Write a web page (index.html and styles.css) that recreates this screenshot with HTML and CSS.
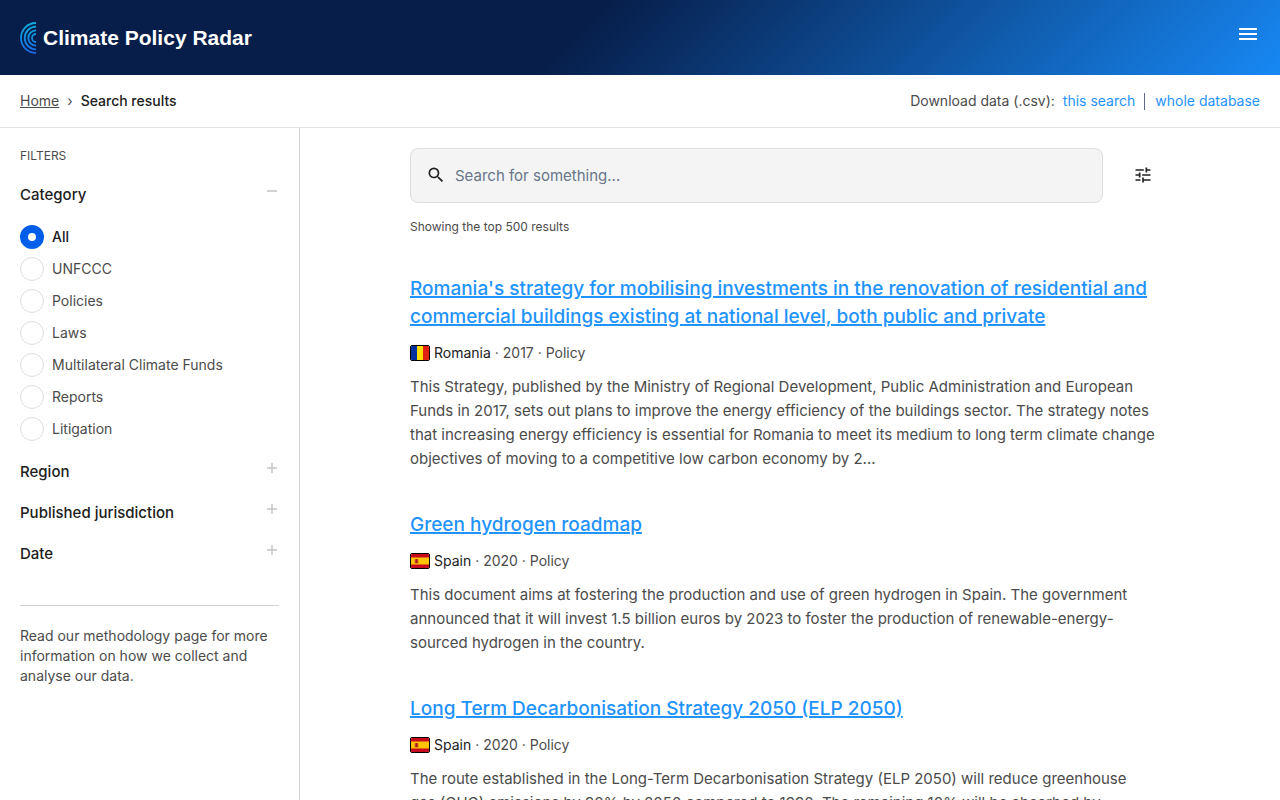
FILE: index.html
```html
<!DOCTYPE html>
<html lang="en">
<head>
<meta charset="utf-8">
<meta name="viewport" content="width=device-width, initial-scale=1">
<title>Search results - Climate Policy Radar</title>
<link rel="stylesheet" href="styles.css">
</head>
<body>
<header class="site-header">
  <a class="logo" href="#">
    <svg class="logo-mark" width="16" height="32" viewBox="0 0 16 32" aria-hidden="true">
      <defs>
        <linearGradient id="radar" x1="0" y1="0" x2="0" y2="32" gradientUnits="userSpaceOnUse">
          <stop offset="0" stop-color="#0cb4e0"/>
          <stop offset="1" stop-color="#1d63e0"/>
        </linearGradient>
      </defs>
      <g fill="none" stroke="url(#radar)" stroke-width="1.8">
        <path d="M16 1A15 15 0 0 0 16 31"/>
        <path d="M16 4.7A11.3 11.3 0 0 0 16 27.3"/>
        <path d="M16 8.3A7.7 7.7 0 0 0 16 23.7"/>
        <path d="M16 12A4 4 0 0 0 16 20"/>
      </g>
    </svg>
    <span>Climate Policy Radar</span>
  </a>
  <button class="icon-button menu-button" type="button" aria-label="Menu">
    <svg width="24" height="24" viewBox="0 0 24 24" fill="currentColor" aria-hidden="true"><path d="M3 18h18v-2H3v2zm0-5h18v-2H3v2zm0-7v2h18V6H3z"/></svg>
  </button>
</header>

<div class="subheader">
  <nav class="breadcrumbs" aria-label="Breadcrumb">
    <a href="#">Home</a>
    <span class="separator">›</span>
    <span class="current">Search results</span>
  </nav>
  <div class="downloads">
    <span>Download data (.csv):</span>
    <a href="#">this search</a>
    <span class="bar"></span>
    <a href="#">whole database</a>
  </div>
</div>

<div class="layout">
  <aside class="sidebar">
    <h2 class="filters-title">Filters</h2>
    <section class="filter-group">
      <button class="filter-toggle" type="button" aria-expanded="true">Category
        <svg width="14" height="14" viewBox="0 0 14 14" aria-hidden="true"><path d="M2 7h10" stroke="currentColor" stroke-width="1.5"/></svg>
      </button>
      <div class="options">
        <label><input type="radio" name="category" checked><span>All</span></label>
        <label><input type="radio" name="category"><span>UNFCCC</span></label>
        <label><input type="radio" name="category"><span>Policies</span></label>
        <label><input type="radio" name="category"><span>Laws</span></label>
        <label><input type="radio" name="category"><span>Multilateral Climate Funds</span></label>
        <label><input type="radio" name="category"><span>Reports</span></label>
        <label><input type="radio" name="category"><span>Litigation</span></label>
      </div>
    </section>
    <button class="filter-toggle" type="button" aria-expanded="false">Region
      <svg width="14" height="14" viewBox="0 0 14 14" aria-hidden="true"><path d="M2 7h10M7 2v10" stroke="currentColor" stroke-width="1.5"/></svg>
    </button>
    <button class="filter-toggle" type="button" aria-expanded="false">Published jurisdiction
      <svg width="14" height="14" viewBox="0 0 14 14" aria-hidden="true"><path d="M2 7h10M7 2v10" stroke="currentColor" stroke-width="1.5"/></svg>
    </button>
    <button class="filter-toggle" type="button" aria-expanded="false">Date
      <svg width="14" height="14" viewBox="0 0 14 14" aria-hidden="true"><path d="M2 7h10M7 2v10" stroke="currentColor" stroke-width="1.5"/></svg>
    </button>
    <p class="methodology">Read our methodology page for more information on how we collect and analyse our data.</p>
  </aside>

  <main class="content">
    <div class="column">
      <form class="search-row">
        <div class="search-box">
          <button class="icon-button" type="button" aria-label="Search">
            <svg width="20" height="20" viewBox="0 0 24 24" fill="currentColor" aria-hidden="true"><path d="M15.5 14h-.79l-.28-.27A6.471 6.471 0 0 0 16 9.5 6.5 6.5 0 1 0 9.5 16c1.61 0 3.09-.59 4.23-1.57l.27.28v.79l5 4.99L20.49 19l-4.99-5zm-6 0C7.01 14 5 11.99 5 9.5S7.01 5 9.5 5 14 7.01 14 9.5 11.99 14 9.5 14z"/></svg>
          </button>
          <input type="text" aria-label="Search" placeholder="Search for something...">
        </div>
        <button class="icon-button settings-button" type="button" aria-label="Search settings">
          <svg width="20" height="20" viewBox="0 0 24 24" fill="currentColor" aria-hidden="true"><path d="M3 17v2h6v-2H3zM3 5v2h10V5H3zm10 16v-2h8v-2h-8v-2h-2v6h2zM7 9v2H3v2h4v2h2V9H7zm14 4v-2H11v2h10zm-6-4h2V7h4V5h-4V3h-2v6z"/></svg>
        </button>
      </form>
      <p class="result-count">Showing the top 500 results</p>

      <div class="results">
        <article class="result">
          <h3><a href="#">Romania's strategy for mobilising investments in the renovation of residential and commercial buildings existing at national level, both public and private</a></h3>
          <div class="meta">
            <svg class="flag" viewBox="0 0 18 14" aria-hidden="true"><path fill="#00319c" d="M0 0h6v14H0z"/><path fill="#ffde00" d="M6 0h6v14H6z"/><path fill="#de2110" d="M12 0h6v14h-6z"/></svg>
            <span><b>Romania</b> · 2017 · Policy</span>
          </div>
          <p>This Strategy, published by the Ministry of Regional Development, Public Administration and European Funds in 2017, sets out plans to improve the energy efficiency of the buildings sector. The strategy notes that increasing energy efficiency is essential for Romania to meet its medium to long term climate change objectives of moving to a competitive low carbon economy by 2...</p>
        </article>
        <article class="result">
          <h3><a href="#">Green hydrogen roadmap</a></h3>
          <div class="meta">
            <svg class="flag" viewBox="0 0 18 14" aria-hidden="true"><path fill="#c60b1e" d="M0 0h18v14H0z"/><path fill="#ffc400" d="M0 3.5h18v7H0z"/><path fill="#c8782c" d="M3.5 5.5h4v4h-4z"/><path fill="#ad1519" d="M4.5 5h2v4h-2z"/></svg>
            <span><b>Spain</b> · 2020 · Policy</span>
          </div>
          <p>This document aims at fostering the production and use of green hydrogen in Spain. The government announced that it will invest 1.5 billion euros by 2023 to foster the production of renewable-energy-sourced hydrogen in the country.</p>
        </article>
        <article class="result">
          <h3><a href="#">Long Term Decarbonisation Strategy 2050 (ELP 2050)</a></h3>
          <div class="meta">
            <svg class="flag" viewBox="0 0 18 14" aria-hidden="true"><path fill="#c60b1e" d="M0 0h18v14H0z"/><path fill="#ffc400" d="M0 3.5h18v7H0z"/><path fill="#c8782c" d="M3.5 5.5h4v4h-4z"/><path fill="#ad1519" d="M4.5 5h2v4h-2z"/></svg>
            <span><b>Spain</b> · 2020 · Policy</span>
          </div>
          <p>The route established in the Long-Term Decarbonisation Strategy (ELP 2050) will reduce greenhouse gas&nbsp;(GHG) emissions by 90% by 2050 compared to 1990. The remaining 10% will be absorbed by</p>
        </article>
      </div>
    </div>
  </main>
</div>
</body>
</html>
```
FILE: styles.css
```css
*, *::before, *::after { box-sizing: border-box; }

body {
  margin: 0;
  background: #fff;
  color: #4b4b4b;
  font-family: Inter, "Liberation Sans", sans-serif;
  font-size: 14px;
  line-height: 20px;
}

h2, h3, p { margin: 0; font-weight: 400; }

button, input { font: inherit; color: inherit; }

button {
  padding: 0;
  border: 0;
  background: none;
  cursor: pointer;
}

svg { display: block; flex: none; }

.icon-button { display: flex; }

.site-header {
  display: flex;
  align-items: center;
  justify-content: space-between;
  height: 75px;
  padding: 0 20px;
  background: linear-gradient(135deg, #071e4a 45%, #1788f4 100%);
  color: #fff;
}

.logo {
  display: flex;
  align-items: center;
  gap: 7px;
  color: #fff;
  font: 700 21px/32px "Liberation Sans", Arial, sans-serif;
  text-decoration: none;
}

.menu-button { margin-bottom: 7px; }

.subheader {
  display: flex;
  align-items: center;
  justify-content: space-between;
  padding: 16px 20px;
  border-bottom: 1px solid #e5e5e5;
}

.breadcrumbs, .downloads { display: flex; align-items: center; gap: 8px; }
.breadcrumbs a { color: inherit; }
.current { color: #202020; font-weight: 500; }
.downloads a { color: #1f93ff; text-decoration: none; }
.bar { width: 1px; height: 17px; margin: 0 2px 0 1px; background: #5f6a86; }

.layout { display: flex; }

.sidebar {
  display: flex;
  flex-direction: column;
  gap: 20px;
  flex: 0 0 300px;
  padding: 20px;
  border-right: 1px solid #d1d1d8;
}

.filters-title {
  font-size: 12px;
  line-height: 16px;
  text-transform: uppercase;
}

.filter-toggle {
  display: flex;
  align-items: flex-start;
  justify-content: space-between;
  width: 100%;
  color: #202020;
  font-size: 15px;
  font-weight: 500;
  line-height: 21px;
  text-align: left;
}

.filter-toggle svg { color: #c4c4c4; }

.options {
  display: flex;
  flex-direction: column;
  gap: 8px;
  margin-top: 20px;
}

.options label { display: flex; align-items: center; gap: 8px; }

.options input {
  appearance: none;
  width: 24px;
  height: 24px;
  margin: 0;
  border: 1px solid #dedede;
  border-radius: 50%;
  background: #fff;
}

.options input:checked { border: 8px solid #005eeb; }
.options input:checked + span { color: #202020; font-weight: 500; }

.methodology {
  margin-top: 21px;
  padding-top: 20px;
  border-top: 1px solid #d1d1d8;
}

.content { flex: 1; min-width: 0; padding: 20px; }
.column { max-width: 760px; margin: 0 auto; }

.search-row { display: flex; align-items: center; }
.search-row .icon-button { margin-bottom: 2px; }

.search-box {
  display: flex;
  align-items: center;
  flex: 1;
  gap: 9px;
  height: 55px;
  padding: 0 15px;
  border: 1px solid #dedede;
  border-radius: 8px;
  background: #f4f4f4;
  color: #202020;
}

.search-box input {
  flex: 1;
  min-width: 0;
  padding: 0;
  border: 0;
  outline: 0;
  background: none;
  font-size: 15px;
}

.search-box input::placeholder { color: #677489; opacity: 1; }

.search-row .settings-button { margin-left: 30px; margin-right: 17px; color: #202020; }

.result-count { margin-top: 16px; font-size: 12px; line-height: 16px; }

.results { display: grid; gap: 40px; margin-top: 40px; }
.result { display: grid; gap: 12px; }
.result h3 { font-size: 19px; font-weight: 500; line-height: 28px; }
.result h3 a { color: #1f93ff; text-decoration-thickness: 2px; }
.result p { font-size: 15px; line-height: 24px; }

.meta { display: flex; align-items: center; gap: 4px; }
.meta b { color: #202020; font-weight: 400; }

.flag {
  width: 20px;
  height: 16px;
  border: 1px solid #000;
  border-radius: 2px;
}
```
